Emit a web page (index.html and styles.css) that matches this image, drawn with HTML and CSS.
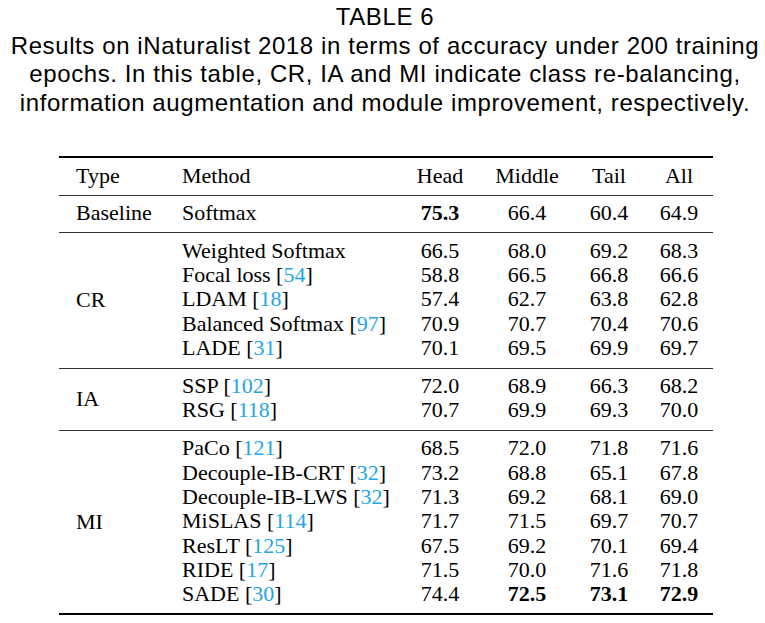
FILE: index.html
```html
<!DOCTYPE html>
<html lang="en">
<head>
<meta charset="utf-8">
<title>Table 6</title>
<link rel="stylesheet" href="styles.css">
</head>
<body>
<div class="caption">
  <div class="cap-title">TABLE 6</div>
  <div>Results on iNaturalist 2018 in terms of accuracy under 200 training</div>
  <div>epochs. In this table, CR, IA and MI indicate class re-balancing,</div>
  <div>information augmentation and module improvement, respectively.</div>
</div>
<table class="results">
  <colgroup>
    <col class="c-type"><col class="c-method"><col class="c-head"><col class="c-mid"><col class="c-tail"><col class="c-all">
  </colgroup>
  <thead>
    <tr>
      <th class="txt">Type</th><th class="txt">Method</th><th>Head</th><th>Middle</th><th>Tail</th><th>All</th>
    </tr>
  </thead>
  <tbody class="sec sec-base">
    <tr class="first last">
      <td class="txt">Baseline</td><td class="txt">Softmax</td><td class="b">75.3</td><td>66.4</td><td>60.4</td><td>64.9</td>
    </tr>
  </tbody>
  <tbody class="sec sec-cr">
    <tr class="first">
      <td class="txt type" rowspan="5">CR</td><td class="txt">Weighted Softmax</td><td>66.5</td><td>68.0</td><td>69.2</td><td>68.3</td>
    </tr>
    <tr><td class="txt">Focal loss [<span class="cite">54</span>]</td><td>58.8</td><td>66.5</td><td>66.8</td><td>66.6</td></tr>
    <tr><td class="txt">LDAM [<span class="cite">18</span>]</td><td>57.4</td><td>62.7</td><td>63.8</td><td>62.8</td></tr>
    <tr><td class="txt">Balanced Softmax [<span class="cite">97</span>]</td><td>70.9</td><td>70.7</td><td>70.4</td><td>70.6</td></tr>
    <tr class="last"><td class="txt">LADE [<span class="cite">31</span>]</td><td>70.1</td><td>69.5</td><td>69.9</td><td>69.7</td></tr>
  </tbody>
  <tbody class="sec sec-ia">
    <tr class="first">
      <td class="txt type" rowspan="2">IA</td><td class="txt">SSP [<span class="cite">102</span>]</td><td>72.0</td><td>68.9</td><td>66.3</td><td>68.2</td>
    </tr>
    <tr class="last"><td class="txt">RSG [<span class="cite">118</span>]</td><td>70.7</td><td>69.9</td><td>69.3</td><td>70.0</td></tr>
  </tbody>
  <tbody class="sec sec-mi">
    <tr class="first">
      <td class="txt type" rowspan="7">MI</td><td class="txt">PaCo [<span class="cite">121</span>]</td><td>68.5</td><td>72.0</td><td>71.8</td><td>71.6</td>
    </tr>
    <tr><td class="txt">Decouple-IB-CRT [<span class="cite">32</span>]</td><td>73.2</td><td>68.8</td><td>65.1</td><td>67.8</td></tr>
    <tr><td class="txt">Decouple-IB-LWS [<span class="cite">32</span>]</td><td>71.3</td><td>69.2</td><td>68.1</td><td>69.0</td></tr>
    <tr><td class="txt">MiSLAS [<span class="cite">114</span>]</td><td>71.7</td><td>71.5</td><td>69.7</td><td>70.7</td></tr>
    <tr><td class="txt">ResLT [<span class="cite">125</span>]</td><td>67.5</td><td>69.2</td><td>70.1</td><td>69.4</td></tr>
    <tr><td class="txt">RIDE [<span class="cite">17</span>]</td><td>71.5</td><td>70.0</td><td>71.6</td><td>71.8</td></tr>
    <tr class="last"><td class="txt">SADE [<span class="cite">30</span>]</td><td>74.4</td><td class="b">72.5</td><td class="b">73.1</td><td class="b">72.9</td></tr>
  </tbody>
</table>
</body>
</html>
```
FILE: styles.css
```css
html, body {
  margin: 0;
  padding: 0;
  background: #ffffff;
  color: #000000;
}

.caption {
  font-family: "Liberation Sans", Arial, Helvetica, sans-serif;
  font-size: 24px;
  line-height: 28.5px;
  letter-spacing: 0.6px;
  text-align: center;
  margin: 3.4px 0 0 0;
  padding-left: 5px;
}

.results {
  margin: 38.6px 0 0 59px;
  width: 654px;
  table-layout: fixed;
  border-collapse: separate;
  border-spacing: 0;
  font-family: "Liberation Serif", "Times New Roman", Times, serif;
  font-size: 22px;
  line-height: 24.3px;
  color: #000;
}

.c-type { width: 106px; }
.c-method { width: 234px; }
.c-head { width: 82px; }
.c-mid { width: 92px; }
.c-tail { width: 72px; }
.c-all { width: 68px; }

.results th,
.results td {
  padding: 0;
  text-align: center;
  font-weight: normal;
  white-space: nowrap;
  vertical-align: middle;
}

.results .txt {
  text-align: left;
  padding-left: 17px;
}

.results thead th {
  border-top: 2px solid #000;
  border-bottom: 1px solid #333;
  padding-top: 6px;
  padding-bottom: 7px;
}

.sec .first td {
  border-top: 0;
}

.sec-cr .first td,
.sec-ia .first td,
.sec-mi .first td {
  border-top: 1px solid #333;
}

.sec-base .first td { padding-top: 4.5px; padding-bottom: 6.5px; }
.sec-cr .first td { padding-top: 6.2px; }
.sec-cr .last td { padding-bottom: 7.5px; }
.sec-ia .first td { padding-top: 5px; }
.sec-ia .last td { padding-bottom: 7.4px; }
.sec-mi .first td { padding-top: 5.6px; }
.sec-mi .last td { padding-bottom: 6.5px; }

.sec-mi .last td,
.sec-mi .type {
  border-bottom: 2px solid #000;
}

.results td.type {
  padding-top: 0;
  padding-bottom: 0;
}

.b { font-weight: bold; }
.results td.b { font-weight: bold; }

.cite { color: #22a6e6; }
```
